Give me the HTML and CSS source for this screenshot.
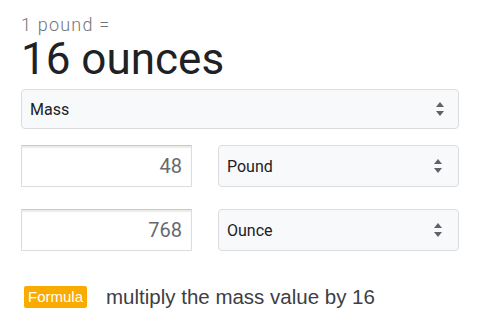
FILE: index.html
```html
<!DOCTYPE html>
<html>
<head>
<meta charset="utf-8">
<link rel="stylesheet" href="styles.css">
</head>
<body>
<div class="card">
  <div class="sub">1 pound =</div>
  <div class="result">16 ounces</div>
  <div class="select mass"><span>Mass</span><svg class="arrows" width="8" height="14" viewBox="0 0 8 14"><path d="M4 0L8 5H0Z M4 14L0 9H8Z" fill="#5f6368"/></svg></div>
  <div class="row">
    <div class="num">48</div>
    <div class="select unit"><span>Pound</span><svg class="arrows" width="8" height="14" viewBox="0 0 8 14"><path d="M4 0L8 5H0Z M4 14L0 9H8Z" fill="#5f6368"/></svg></div>
  </div>
  <div class="row row2">
    <div class="num">768</div>
    <div class="select unit"><span>Ounce</span><svg class="arrows" width="8" height="14" viewBox="0 0 8 14"><path d="M4 0L8 5H0Z M4 14L0 9H8Z" fill="#5f6368"/></svg></div>
  </div>
  <div class="formula">
    <span class="badge">Formula</span>
    <span class="ftext">multiply the mass value by 16</span>
  </div>
</div>
</body>
</html>
```

FILE: styles.css
```css
html, body {
  margin: 0;
  padding: 0;
  background: #ffffff;
}
body {
  font-family: Roboto, "Liberation Sans", Arial, sans-serif;
  color: #202124;
}
.card {
  width: 438px;
  padding: 16px 0 0 21px;
}
.sub {
  font-size: 18px;
  line-height: 18px;
  font-weight: 300;
  letter-spacing: 1.2px;
  color: #70757a;
}
.result {
  font-size: 44px;
  line-height: 51px;
  color: #202124;
}
.select {
  box-sizing: border-box;
  display: flex;
  align-items: center;
  justify-content: space-between;
  background: #f8f9fa;
  border: 1px solid #dadce0;
  border-radius: 4px;
  padding: 0 14px 0 8px;
  font-size: 16px;
  color: #202124;
}
.mass {
  margin-top: 4px;
  height: 40px;
  width: 438px;
}
.row {
  display: flex;
  gap: 26px;
  margin-top: 16px;
  height: 42px;
}
.row2 {
  margin-top: 22px;
}
.num {
  box-sizing: border-box;
  width: 171px;
  height: 42px;
  border: 1px solid #dcdcdc;
  border-top: 1px solid #c8c8c8;
  box-shadow: inset 0 2px 1px rgba(0, 0, 0, 0.08);
  border-radius: 1px;
  background: #fff;
  text-align: right;
  padding-right: 9px;
  font-size: 20px;
  line-height: 41px;
  color: #666a6e;
}
.unit {
  width: 241px;
  height: 42px;
  padding-left: 8px;
  padding-right: 16px;
}
.arrows {
  display: block;
}
.formula {
  display: flex;
  align-items: center;
  gap: 19px;
  margin-top: 34px;
  margin-left: 3px;
}
.badge {
  font-family: "Liberation Sans", Arial, sans-serif;
  background: #f9ab00;
  color: #fff;
  font-size: 15px;
  line-height: 22px;
  height: 22px;
  padding: 0 4px;
  border-radius: 2px;
}
.ftext {
  font-family: "Liberation Sans", Arial, sans-serif;
  font-size: 20.5px;
  line-height: 24px;
  color: #3c4043;
}
```
